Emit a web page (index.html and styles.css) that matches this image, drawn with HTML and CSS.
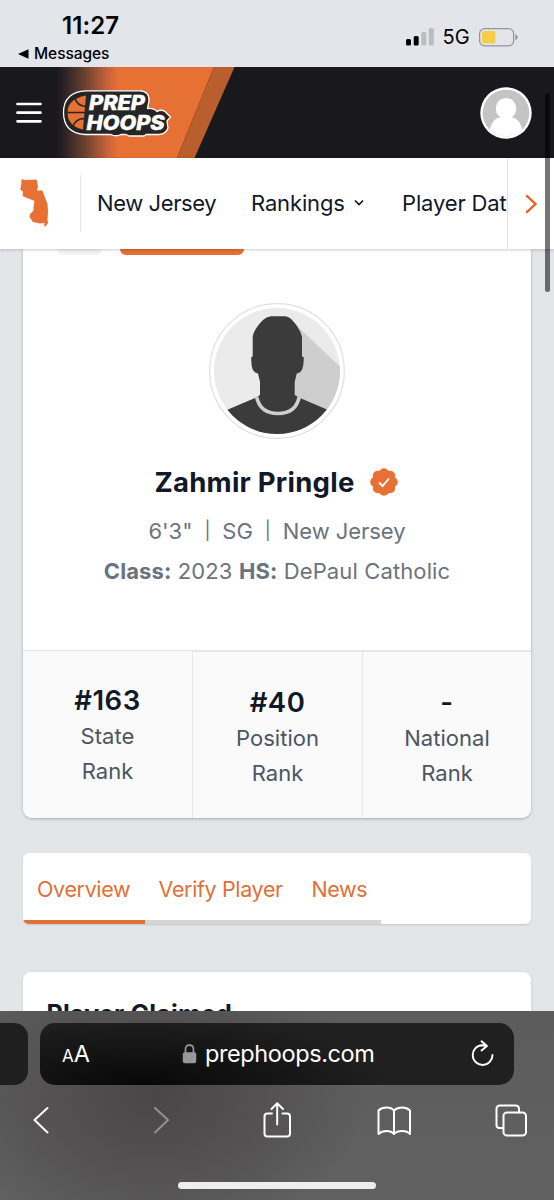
FILE: index.html
```html
<!DOCTYPE html>
<html lang="en">
<head>
<meta charset="utf-8">
<meta name="viewport" content="width=device-width, initial-scale=1">
<title>Zahmir Pringle | Prep Hoops</title>
<link rel="stylesheet" href="styles.css">
</head>
<body>
<div class="screen">
  <div class="status">
    <div class="status-left">
      <span class="clock">11:27</span>
      <span class="back-app"><svg width="11" height="10" viewBox="0 0 11 10"><path d="M0 5L10.500 .3V9.700Z"/></svg>Messages</span>
    </div>
    <div class="status-right">
      <svg width="28" height="18" viewBox="0 0 28 18"><rect x="0" y="11" width="5" height="6.500" rx="1.500"/><rect x="7.700" y="8" width="5" height="9.500" rx="1.500"/><g fill="#bcbcc0"><rect x="15.300" y="4" width="5" height="13.500" rx="1.500"/><rect x="22.800" y="0" width="5" height="17.500" rx="1.500"/></g></svg>
      <span class="network">5G</span>
      <svg width="39" height="19" viewBox="0 0 39 19"><rect x=".6" y=".6" width="34" height="17.300" rx="5" fill="none" stroke="#939399" stroke-width="1.200"/><rect x="3" y="3" width="13.500" height="12.500" rx="2.500" fill="#f6cd46"/><path d="M36.500 6.300q2 1 2 3t-2 3z" fill="#85858b"/></svg>
    </div>
  </div>

  <header class="site-header">
    <svg class="header-art" width="240" height="91" viewBox="0 0 240 91">
      <defs><linearGradient id="fade"><stop offset="0" stop-color="#19181d"/><stop offset=".12" stop-color="#282027"/><stop offset=".45" stop-color="#67402e"/><stop offset=".82" stop-color="#c4633a"/><stop offset="1" stop-color="#e77034"/></linearGradient></defs>
      <path d="M56 0H118V91H56Z" fill="url(#fade)"/>
      <path d="M117 0H214L177 91H117Z" fill="#e77034"/>
      <path d="M214 0H234.500L194.500 91H177Z" fill="#b95e2c"/>
    </svg>
    <svg class="menu" width="26" height="22" viewBox="0 0 26 22"><path d="M1.500 2H24.500M1.500 10.700H24.500M1.500 19.300H24.500" stroke="#fff" stroke-width="2.700" stroke-linecap="round"/></svg>
    <svg class="logo" width="112" height="50" viewBox="0 0 112 50">
      <g stroke-linejoin="round">
        <path d="M24 2.800H78Q87.500 3 87 13L85.500 20.500Q92 20 95 23.500Q99 21 103 23.500L108.500 29L105 33L106 40Q104 46 97 46.500H84L82 48H67L64 46.500H59Q54 49 49 46.500H23Q1.500 45 1.500 24.500T24 2.800Z" fill="#252525" stroke="#fff" stroke-width="1.300"/>
        <path d="M24 7.500L21 41.500Q5.500 38 5.500 24.500T24 7.500Z" fill="#e77034"/>
        <path d="M5 24.500H23M13 10Q15 18 24 18.500M11 39Q13 30.500 23 30.500" fill="none" stroke="#252525" stroke-width="1.500"/>
      </g>
      <g class="logo-text"><text x="27" y="22.300" textLength="56" lengthAdjust="spacingAndGlyphs">PREP</text><text x="24.500" y="41.500" textLength="78" lengthAdjust="spacingAndGlyphs">HOOPS</text></g>
    </svg>
    <svg class="account" width="52" height="52" viewBox="0 0 52 52"><defs><clipPath id="acct"><circle cx="26" cy="26" r="23.300"/></clipPath></defs><circle cx="26" cy="26" r="25.700" fill="#fff"/><g clip-path="url(#acct)"><path d="M0 0H52V52H0Z" fill="#c4c4c4"/><ellipse cx="26" cy="21.500" rx="10.300" ry="10.500" fill="#fff"/><path d="M9 52Q9 31 22 30H30Q43 31 43 52Z" fill="#fff"/></g></svg>
  </header>

  <nav class="site-nav">
    <div class="state-icon"><svg width="30" height="50" viewBox="0 0 30 50"><path d="M1.500 1.300L6 2L16.500 1.500L18 8L17 12.500L22.500 12.500L24 17L27.500 26L28 33L27.500 42L28 45L25.500 48.500L24 48L24.500 45L20 45.500L13 44L9.500 39L10 36L13.500 32.500L13.500 29L14.500 23L2.500 18L3 13.500L.3 11.500L1.300 6Z" fill="#e77034"/></svg></div>
    <div class="nav-links">
      <span class="nav-state">New Jersey</span>
      <span class="nav-rankings">Rankings <svg width="10" height="8" viewBox="0 0 10 8"><path d="M1 1.500L5 5.500L9 1.500" fill="none" stroke="#111827" stroke-width="1.700"/></svg></span>
      <span class="nav-database">Player Database</span>
    </div>
    <div class="nav-next"><svg width="12" height="20" viewBox="0 0 12 20"><path d="M1.300 1.300L10.500 10L1.300 18.700" fill="none" stroke="#e2662b" stroke-width="2.400"/></svg></div>
  </nav>

  <main class="content">
    <section class="profile">
      <div class="top-actions"><i class="pill-gray"></i><i class="pill-orange"></i></div>
      <svg class="portrait" width="136" height="136" viewBox="0 0 136 136">
        <defs><clipPath id="por"><circle cx="68" cy="68" r="63"/></clipPath></defs>
        <circle cx="68" cy="68" r="67.300" fill="#fff" stroke="#dde1e7" stroke-width="1.300"/>
        <g clip-path="url(#por)"><path d="M0 0H136V136H0Z" fill="#ebebeb"/><path d="M90 25L131 63.500L136 68V136H70Z" fill="#cecece"/>
        <path d="M62 13.300H76Q81 14 83.500 17.500Q90 24 93 33.500V53.500L94.700 54Q95 62 93.300 66Q91.500 70 87.700 70.500L85.700 79V92L91 95L118 106.500L136 115V136H0V115L19 106.500L46 95L51 92V79L49 70.500Q45 70 43.500 66Q42 62 42.300 54L43.700 53.500V33.500Q45 26 54 17Q57 14 62 13.300Z" fill="#3b3b3b"/>
        <path d="M47.500 93.500Q51 110.500 69 110.500T90.300 93.500" fill="none" stroke="#cfcfcf" stroke-width="3.700"/></g>
      </svg>
      <h1 class="player"><span class="player-name">Zahmir Pringle</span>
        <svg width="28" height="28" viewBox="0 0 28 28"><g fill="#e77034"><circle cx="14" cy="14" r="12"/><circle cx="14" cy="5.200" r="5"/><circle cx="20.200" cy="7.800" r="5"/><circle cx="22.800" cy="14" r="5"/><circle cx="20.200" cy="20.200" r="5"/><circle cx="14" cy="22.800" r="5"/><circle cx="7.800" cy="20.200" r="5"/><circle cx="5.200" cy="14" r="5"/><circle cx="7.800" cy="7.800" r="5"/></g><path d="M9 14.500L12.500 18L19 10.500" fill="none" stroke="#fff" stroke-width="1.900"/></svg>
      </h1>
      <p class="facts"><span>6'3"</span><i>|</i><span>SG</span><i>|</i><span>New Jersey</span></p>
      <p class="school"><b>Class:</b> 2023 <b>HS:</b> DePaul Catholic</p>
      <div class="ranks">
        <div class="rank"><strong>#163</strong><span>State<br>Rank</span></div>
        <div class="rank"><strong>#40</strong><span>Position<br>Rank</span></div>
        <div class="rank"><strong>-</strong><span>National<br>Rank</span></div>
      </div>
    </section>
    <div class="tabs"><span class="tab active">Overview</span><span class="tab verify">Verify Player</span><span class="tab news">News</span></div>
    <section class="claimed"><h2>Player Claimed</h2></section>
  </main>

  <footer class="browser">
    <div class="address-row">
      <div class="prev-page"></div>
      <div class="address">
        <span class="text-size"><small>A</small>A</span>
        <span class="domain"><svg width="15" height="20" viewBox="0 0 15 20"><path d="M3.500 9V5.500Q3.500 1.200 7.500 1.200T11.500 5.500V9" fill="none" stroke="#98979d" stroke-width="1.700"/><rect x=".8" y="8.300" width="13.400" height="11" rx="2" fill="#98979d"/></svg><span>prephoops.com</span></span>
        <svg class="reload" width="24" height="28" viewBox="0 0 24 28" fill="none" stroke="#fff" stroke-width="1.900" stroke-linecap="round" stroke-linejoin="round"><path d="M15.500 6.300Q13 5.200 11 5.200A9.900 9.900 0 1 0 21.500 15M10.500 1.300L16 6L10.500 10.500"/></svg>
      </div>
    </div>
    <div class="toolbar">
      <svg width="34" height="36" viewBox="0 0 34 36"><path d="M23.500 6L10.500 18L23.500 30.500"/></svg>
      <svg class="disabled" width="34" height="36" viewBox="0 0 34 36"><path d="M13 6L26 18L13 30.500"/></svg>
      <svg width="34" height="36" viewBox="0 0 34 36"><path d="M12 11.500H7.500Q4.500 11.500 4.500 14.500V31.500Q4.500 34.500 7.500 34.500H27Q30 34.500 30 31.500V14.500Q30 11.500 27 11.500H22.500M17.200 22.500V1.500M11.500 7L17.200 1.300L23 7"/></svg>
      <svg width="34" height="36" viewBox="0 0 34 36"><path d="M16 8.500Q13.500 5.500 8.500 5.500T0.500 8.500V32Q3.500 29 8.500 29T16 32Q18.500 29 24 29T32 32V8.500Q29 5.500 24 5.500T16 8.500V32"/></svg>
      <svg width="34" height="36" viewBox="0 0 34 36"><path d="M7 26H3.500Q.5 26 .5 23V7Q.5 3.500 4 3.500H19.500Q23 3.500 23 7V10.500"/><rect x="7.500" y="10.500" width="22.500" height="23" rx="3.500"/></svg>
    </div>
    <div class="home-bar"></div>
  </footer>
  <div class="scroll-thumb"></div>
</div>
</body>
</html>
```
FILE: styles.css
```css
* { box-sizing: border-box; }
body { margin: 0; font-family: Inter, "Liberation Sans", sans-serif; color: #111827; }
h1, h2, p { margin: 0; }
svg { display: block; flex: none; overflow: visible; }
.screen { position: relative; width: 554px; height: 1200px; overflow: hidden; display: flex; flex-direction: column; background: #e4e5e9; }

.status { height: 67px; flex: none; display: flex; justify-content: space-between; padding: 12px 36px 0 18px; color: #000; background: #e4e5ea; }
.status-left { display: flex; flex-direction: column; }
.clock { padding-left: 44px; font-size: 24px; line-height: 28px; font-weight: 600; letter-spacing: .1px; }
.back-app { display: flex; align-items: center; gap: 5px; font-size: 15.500px; line-height: 20px; margin-top: 4px; font-weight: 500; letter-spacing: -.05px; }
.status-right { display: flex; height: 20px; margin-top: 15px; align-items: center; }
.network { width: 45px; padding-left: 8.500px; font-size: 20px; }

.site-header { position: relative; height: 91px; flex: none; background: #19181d; display: flex; align-items: center; padding: 0 22px 0 16px; }
.header-art { position: absolute; left: 0; top: 0; }
.menu, .logo { position: relative; }
.logo { margin-left: 20px; }
.logo-text { fill: #fff; stroke: #fff; stroke-width: .5px; font: italic 800 20px Inter, sans-serif; }
.account { margin-left: auto; }

.site-nav { position: relative; height: 91px; flex: none; display: flex; align-items: center; background: #fff; box-shadow: 0 1px 3px #0003; }
.state-icon { width: 81px; height: 57px; padding: 0 0 2px 20px; border-right: 1.500px solid #e5e6e9; display: flex; align-items: center; }
.nav-links { flex: 1; min-width: 0; display: flex; padding: 0 0 2px 16px; overflow: hidden; white-space: nowrap; font-size: 22px; line-height: 30px; }
.nav-links span { flex: none; }
.nav-state { width: 154px; letter-spacing: -.4px; }
.nav-rankings { width: 151px; display: flex; align-items: center; gap: 9px; letter-spacing: -.15px; }
.nav-database { letter-spacing: -.15px; }
.nav-next { width: 47px; height: 91px; border-left: 1.500px solid #e0e1e4; display: flex; align-items: center; padding-left: 17px; }

.content { flex: 1; min-height: 0; overflow: hidden; padding: 0 23px; }
.profile { height: 568.500px; background: #fff; border-radius: 0 0 9px 9px; box-shadow: 0 1px 3px #0004; display: flex; flex-direction: column; align-items: center; overflow: hidden; }
.top-actions { height: 6px; align-self: flex-start; display: flex; padding-left: 34px; gap: 18px; }
.pill-gray { width: 45px; height: 6px; border-radius: 0 0 12px 12px; background: #f3f3f4; }
.pill-orange { width: 124px; height: 6px; border-radius: 0 0 8px 8px; background: #e77034; }
.portrait { margin-top: 48px; }
.player { height: 34px; margin-top: 25.500px; margin-right: 2px; display: flex; align-items: center; gap: 15px; font-size: 27.500px; line-height: 34px; font-weight: 700; letter-spacing: .25px; }
.facts { display: flex; gap: 12px; margin-top: 17px; font-size: 22px; line-height: 30px; color: #6b7280; letter-spacing: -.05px; }
.facts i { width: 6px; font-style: normal; font-size: 18px; text-align: center; }
.school { margin-top: 10px; font-size: 22px; line-height: 30px; color: #6b7280; white-space: nowrap; letter-spacing: .12px; }
.school b { font-weight: 700; }
.ranks { width: 100%; flex: none; height: 167.500px; margin-top: auto; display: grid; grid-template-columns: 170px 170px 1fr; background: #fafafa; border-top: 1.500px solid #e5e7eb; }
.rank { display: flex; flex-direction: column; align-items: center; text-align: center; padding-top: 30px; border-right: 1.500px solid #e5e7eb; }
.rank + .rank { padding-top: 31px; border-top: 1px solid #e5e7eb; }
.rank:last-child { border-right: 0; }
.rank strong { font-size: 27.500px; line-height: 38px; font-weight: 600; letter-spacing: .5px; }
.rank span { font-size: 22px; line-height: 34.500px; color: #4b5563; letter-spacing: .05px; }

.tabs { height: 71px; margin-top: 35.500px; display: flex; background: #fff; border-radius: 6px; overflow: hidden; box-shadow: 0 1px 2px #0002; color: #e07035; font-size: 21.500px; line-height: 73px; white-space: nowrap; letter-spacing: -.36px; }
.tab { height: 71px; padding-left: 14px; border-bottom: 4px solid #d5d5d6; }
.active { width: 121.500px; border-color: #e07035; }
.verify { width: 153px; }
.news { width: 83.500px; }
.claimed { height: 100px; margin-top: 48px; padding: 25px 23.500px; background: #fff; border-radius: 8px; box-shadow: 0 1px 3px #0002; }
.claimed h2 { font-size: 25px; line-height: 34px; font-weight: 700; letter-spacing: .2px; }

.browser { position: relative; height: 189px; flex: none; padding-top: 11.500px; background: radial-gradient(ellipse 210px 150px at 155px 85px, #484646, #535151 50%, transparent), linear-gradient(#5c5c5d, #616161); }
.address-row { display: flex; gap: 12px; }
.prev-page { width: 28px; height: 62px; border-radius: 0 14px 14px 0; background: #1f1f20; }
.address { width: 474px; height: 62px; display: flex; align-items: center; padding: 0 19px 0 22px; border-radius: 15px; background: radial-gradient(ellipse 250px 70px at 100px 62px, #090808, #202020); color: #fff; }
.text-size { font-size: 23.500px; width: 119.500px; }
.text-size small { font-size: 17px; }
.domain { display: flex; align-items: center; gap: 8.500px; font-size: 23.500px; letter-spacing: -.4px; }
.reload { margin-left: auto; }
.toolbar { display: flex; justify-content: space-between; padding: 0 24px; margin-top: 17px; fill: none; stroke: #fff; stroke-width: 2; stroke-linecap: round; stroke-linejoin: round; }
.disabled { stroke: #929192; }
.home-bar { width: 198px; height: 7px; margin: 44px auto 0; border-radius: 4px; background: #eeeeed; }
.scroll-thumb { position: absolute; left: 545px; top: 93px; width: 5px; height: 199px; border-radius: 3px; background: #0000008a; }
```
